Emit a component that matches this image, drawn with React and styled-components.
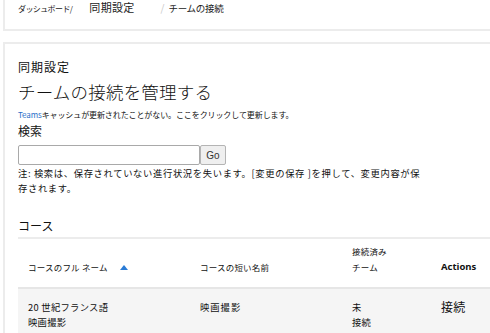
import styled, { createGlobalStyle } from "styled-components";

const GlobalStyle = createGlobalStyle`
  html, body {
    margin: 0;
    padding: 0;
    background: #fff;
    overflow: hidden;
  }
  body {
    font-family: "Noto Sans CJK JP", "Noto Sans", sans-serif;
    color: #111;
  }
`;

const Page = styled.div`
  width: 560px;
  padding-left: 3px;
`;

const Card = styled.section`
  border-left: 2px solid #ececec;
  border-top: ${(p) => (p.$top ? "none" : "2px solid #ececec")};
  border-bottom: ${(p) => (p.$top ? "2px solid #ececec" : "none")};
  padding: ${(p) => (p.$top ? "1px 0 15px 13px" : "15px 0 0 13px")};
  margin-bottom: ${(p) => (p.$top ? "11px" : "0")};
`;

const Crumbs = styled.nav`
  display: flex;
  align-items: baseline;
  height: 13px;
  line-height: 13px;
`;

const Crumb = styled.span`
  font-size: ${(p) => p.$size}px;
  letter-spacing: ${(p) => p.$ls || 0}px;
  margin-right: ${(p) => p.$gap || 0}px;
  color: #222;
`;

const Sep = styled.span`
  color: #c8c8c8;
  font-size: 10px;
  margin-right: 4px;
`;

const Eyebrow = styled.div`
  font-size: 12px;
  line-height: 16px;
  letter-spacing: 1px;
  margin-bottom: 5px;
`;

const Title = styled.h1`
  margin: 0;
  font-size: 17.5px;
  font-weight: 300;
  line-height: 24px;
  letter-spacing: 0.2px;
`;

const Notice = styled.p`
  margin: 5px 0 0;
  font-size: 8px;
  line-height: 11px;
  letter-spacing: -0.1px;
`;

const Link = styled.span`
  color: #2a6fc9;
`;

const Label = styled.div`
  font-size: 12px;
  line-height: 16px;
  margin-top: 3px;
`;

const SearchRow = styled.div`
  display: flex;
  margin-top: 6px;
  height: 20px;
`;

const SearchInput = styled.input`
  box-sizing: border-box;
  width: 182px;
  height: 20px;
  border: 1px solid #a9a9a9;
  border-radius: 2px;
  margin: 0;
  padding: 0 3px;
`;

const GoButton = styled.button`
  box-sizing: border-box;
  width: 26px;
  height: 20px;
  margin: 0;
  padding: 0;
  border: 1px solid #b4b4b4;
  border-radius: 2px;
  background: #efefef;
  font-family: "Liberation Sans", sans-serif;
  font-size: 10px;
  color: #333;
`;

const Note = styled.p`
  margin: 1px 0 0;
  width: 410px;
  font-size: 9.3px;
  line-height: 15px;
  letter-spacing: 0.65px;
`;

const SectionTitle = styled.h2`
  margin: 22px 0 0;
  font-size: 12px;
  font-weight: 400;
  line-height: 16px;
  padding-bottom: 3px;
  border-bottom: 2px solid #ececec;
  width: 530px;
`;

const Table = styled.table`
  border-collapse: collapse;
  width: 530px;
  table-layout: fixed;
`;

const Th = styled.th`
  text-align: left;
  vertical-align: bottom;
  font-weight: ${(p) => (p.$bold ? 700 : 400)};
  font-family: ${(p) =>
    p.$bold ? '"Open Sans", "Noto Sans", sans-serif' : "inherit"};
  font-size: ${(p) => (p.$bold ? "9.5px" : "8.5px")};
  line-height: 16px;
  padding: 0 10px 12px;
  height: 36px;
  border-bottom: 2px solid #e6e6e6;
  width: ${(p) => (p.$w ? `${p.$w}px` : "auto")};
  letter-spacing: ${(p) => (p.$bold ? "0" : "0.2px")};
`;

const Row = styled.tr`
  background: #f5f5f5;
`;

const Td = styled.td`
  vertical-align: top;
  font-size: ${(p) => (p.$big ? "12px" : "9.3px")};
  line-height: ${(p) => (p.$big ? "18px" : "15px")};
  padding: ${(p) => (p.$big ? "9px 10px" : "11px 10px 4px")};
  letter-spacing: ${(p) => p.$ls || 0.3}px;
`;

const SortArrow = styled.svg`
  margin-left: 12px;
  vertical-align: 1px;
`;

export default function App() {
  return (
    <>
      <GlobalStyle />
      <Page>
        <Card $top>
          <Crumbs>
            <Crumb $size={8} $ls={-0.6} $gap={17}>
              ダッシュボード/
            </Crumb>
            <Crumb $size={11} $ls={0.3} $gap={26}>
              同期設定
            </Crumb>
            <Sep>/</Sep>
            <Crumb $size={9.5} $ls={-0.3}>
              チームの接続
            </Crumb>
          </Crumbs>
        </Card>
        <Card>
          <Eyebrow>同期設定</Eyebrow>
          <Title>チームの接続を管理する</Title>
          <Notice>
            <Link>Teams</Link>キャッシュが更新されたことがない。ここをクリックして更新します。
          </Notice>
          <Label>検索</Label>
          <SearchRow>
            <SearchInput type="text" />
            <GoButton>Go</GoButton>
          </SearchRow>
          <Note>
            {"注: 検索は、保存されていない進行状況を失います。[変更の保存 ]を押して、変更内容が保存されます。"}
          </Note>
          <SectionTitle>コース</SectionTitle>
          <Table>
            <thead>
              <tr>
                <Th $w={152}>
                  コースのフル ネーム
                  <SortArrow width="8" height="5" viewBox="0 0 8 5">
                    <path d="M0 5 L4 0 L8 5 Z" fill="#2a7bd6" />
                  </SortArrow>
                </Th>
                <Th $w={132}>コースの短い名前</Th>
                <Th $w={69}>
                  接続済み
                  <br />
                  チーム
                </Th>
                <Th $bold>Actions</Th>
              </tr>
            </thead>
            <tbody>
              <Row>
                <Td>
                  20 世紀フランス語
                  <br />
                  映画撮影
                </Td>
                <Td $ls={1}>映画撮影</Td>
                <Td>
                  未<br />
                  接続
                </Td>
                <Td $big>接続</Td>
              </Row>
            </tbody>
          </Table>
        </Card>
      </Page>
    </>
  );
}
